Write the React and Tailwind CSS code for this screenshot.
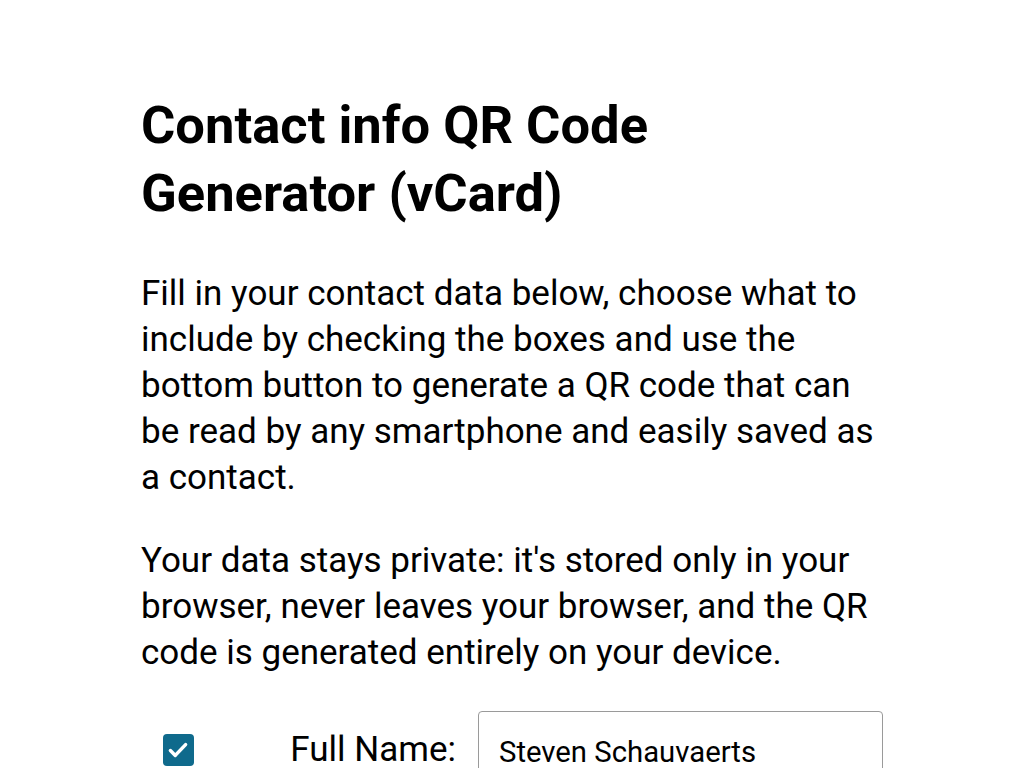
export default function App() {
  return (
    <div className="min-h-screen bg-white font-['Roboto',sans-serif] text-black">
      <div className="w-[742px] ml-[141px] pt-[91px]">
        <h1 className="text-[52.5px] font-bold leading-[68px] mb-[44px]">
          Contact info QR Code Generator (vCard)
        </h1>
        <p className="text-[35px] leading-[46px] mb-[37px]">
          Fill in your contact data below, choose what to include by checking the boxes and use the
          bottom button to generate a QR code that can be read by any smartphone and easily saved as
          a contact.
        </p>
        <p className="text-[35px] leading-[46px] mb-[35px]">
          Your data stays private: it's stored only in your browser, never leaves your browser, and
          the QR code is generated entirely on your device.
        </p>
        <div className="flex items-start">
          <div className="w-[74px] flex justify-center pt-[23px]">
            <span className="w-[31px] h-[32px] rounded-[4px] bg-[#0f6a8c] flex items-center justify-center">
              <svg width="26" height="26" viewBox="0 0 24 24" fill="none">
                <path
                  d="M5 12.5l4.5 4.5L19 7"
                  stroke="white"
                  strokeWidth="3.2"
                  strokeLinecap="round"
                  strokeLinejoin="round"
                />
              </svg>
            </span>
          </div>
          <label className="flex-1 text-right pr-[22px] text-[35px] leading-[78px]">
            Full Name:
          </label>
          <input
            type="text"
            defaultValue="Steven Schauvaerts"
            className="w-[405px] h-[82px] border-[1.5px] border-[#9a9a9a] rounded-[4px] px-[20px] text-[29.3px] outline-none"
          />
        </div>
      </div>
    </div>
  );
}
